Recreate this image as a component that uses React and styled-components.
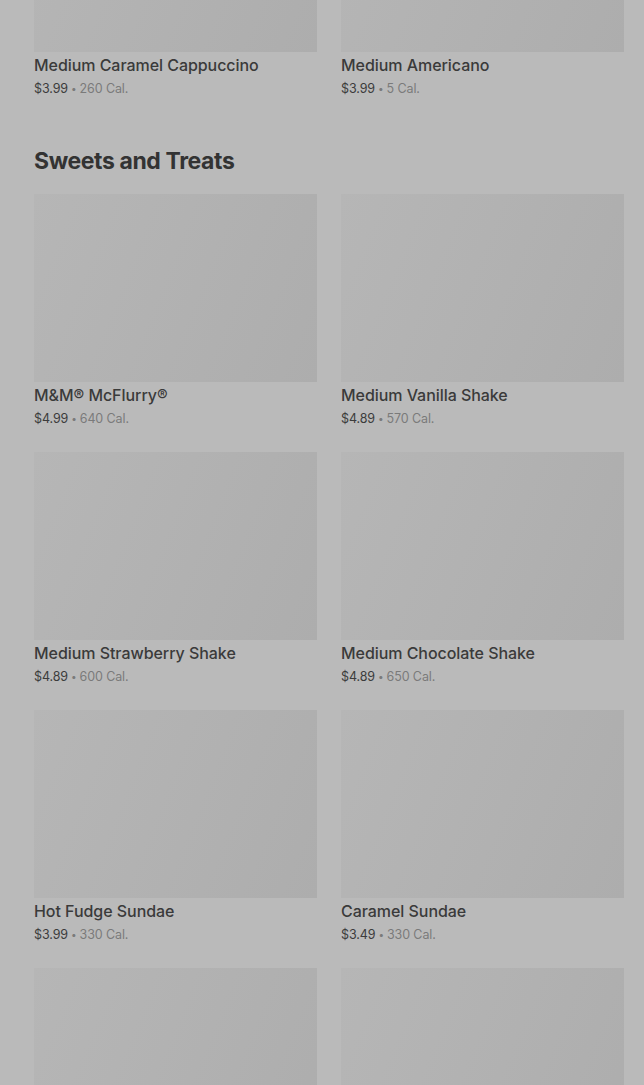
import React from "react";
import styled, { createGlobalStyle } from "styled-components";

const Global = createGlobalStyle`
  html, body { margin: 0; padding: 0; background: #bababa; }
  body { font-family: Inter, "Noto Sans", "Liberation Sans", sans-serif; overflow: hidden; }
`;

const Page = styled.main`
  width: 644px;
  height: 1085px;
  overflow: hidden;
  background: #bababa;
  box-sizing: border-box;
  padding: 0 20px 0 34px;
`;

const Scroller = styled.div`
  margin-top: -136px;
`;

const Section = styled.section`
  & + & { margin-top: 46px; }
`;

const Heading = styled.h2`
  margin: 0 0 17px;
  font-size: 23px;
  line-height: 32px;
  font-weight: 700;
  letter-spacing: -0.4px;
  color: #333333;
`;

const Grid = styled.div`
  display: grid;
  grid-template-columns: 1fr 1fr;
  column-gap: 24px;
  row-gap: 23px;
`;

const Card = styled.div`
  display: flex;
  flex-direction: column;
`;

const Thumb = styled.div`
  height: 188px;
  background: linear-gradient(112deg, #b6b6b6 0%, #b2b2b2 45%, #adadad 100%);
`;

const Name = styled.div`
  margin-top: 3px;
  font-size: 16px;
  line-height: 20px;
  font-weight: 500;
  color: #3a3a3a;
  letter-spacing: -0.05px;
`;

const Meta = styled.div`
  margin-top: 4px;
  height: 20px;
  font-size: 12.5px;
  line-height: 20px;
  color: #7a7a7a;
  letter-spacing: -0.1px;
`;

const Price = styled.span`
  color: #3c3c3c;
`;

const Dot = styled.span`
  margin: 0 3px;
  font-size: 10px;
  line-height: 0;
  vertical-align: 1px;
  color: #7a7a7a;
`;

const coffee = [
  { name: "Medium Caramel Cappuccino", price: "$3.99", cal: "260 Cal." },
  { name: "Medium Americano", price: "$3.99", cal: "5 Cal." },
];

const sweets = [
  { name: "M&M\u00ae McFlurry\u00ae", price: "$4.99", cal: "640 Cal." },
  { name: "Medium Vanilla Shake", price: "$4.89", cal: "570 Cal." },
  { name: "Medium Strawberry Shake", price: "$4.89", cal: "600 Cal." },
  { name: "Medium Chocolate Shake", price: "$4.89", cal: "650 Cal." },
  { name: "Hot Fudge Sundae", price: "$3.99", cal: "330 Cal." },
  { name: "Caramel Sundae", price: "$3.49", cal: "330 Cal." },
  { thumbOnly: true, name: "more-1" },
  { thumbOnly: true, name: "more-2" },
];

function Item({ item }) {
  return (
    <Card>
      <Thumb />
      {!item.thumbOnly && (
        <>
          <Name>{item.name}</Name>
          <Meta>
            <Price>{item.price}</Price>
            <Dot>•</Dot>
            {item.cal}
          </Meta>
        </>
      )}
    </Card>
  );
}

export default function App() {
  return (
    <>
      <Global />
      <Page>
        <Scroller>
          <Section>
            <Grid>
              {coffee.map((c) => (
                <Item key={c.name} item={c} />
              ))}
            </Grid>
          </Section>
          <Section>
            <Heading>Sweets and Treats</Heading>
            <Grid>
              {sweets.map((c) => (
                <Item key={c.name} item={c} />
              ))}
            </Grid>
          </Section>
        </Scroller>
      </Page>
    </>
  );
}
